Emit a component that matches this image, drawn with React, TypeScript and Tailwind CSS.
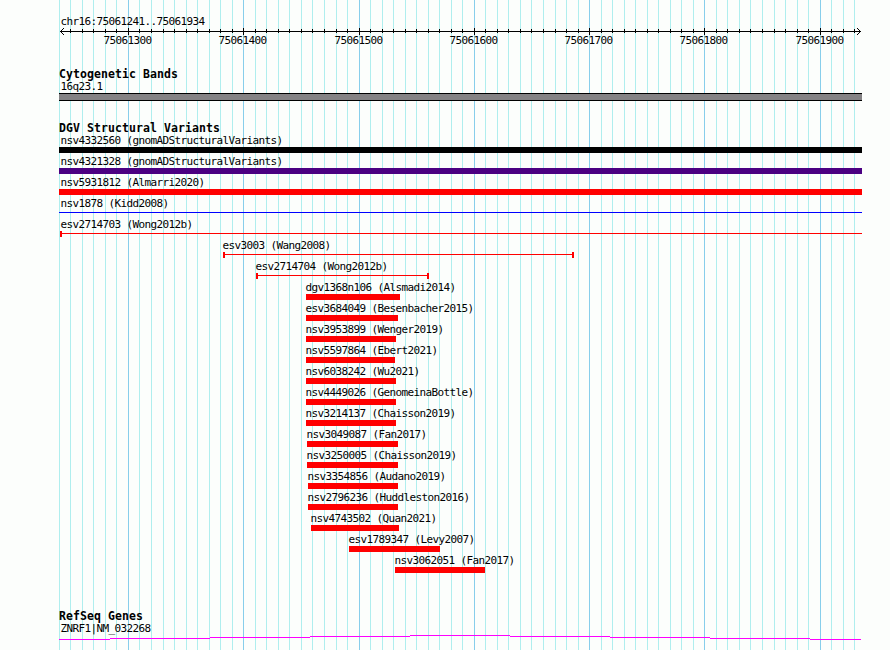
import { clsx } from "clsx";

type Shape = "bar" | "line" | "span";

type Variant = {
  label: string;
  start: number;
  end: number;
  shape?: Shape;
  color?: string;
  labelX?: number;
};

const LEFT = 59;
const RIGHT = 862;

const MAJOR_TICKS = [128, 243, 359, 474, 589, 704, 820];
const MINOR_TICKS = [
  70, 82, 93, 105, 116, 139, 151, 163, 174, 186, 197, 209, 220, 232, 255, 266, 278, 289, 301, 312,
  324, 336, 347, 370, 382, 393, 405, 416, 428, 439, 451, 462, 485, 497, 508, 520, 531, 543, 555,
  566, 578, 601, 612, 624, 635, 647, 658, 670, 681, 693, 716, 727, 739, 750, 762, 774, 785, 797,
  808, 831, 843, 854,
];

const VARIANTS: Variant[] = [
  { label: "nsv4332560 (gnomADStructuralVariants)", start: LEFT, end: RIGHT, color: "bg-black", labelX: 60.5 },
  { label: "nsv4321328 (gnomADStructuralVariants)", start: LEFT, end: RIGHT, color: "bg-[#4b0082]", labelX: 60.5 },
  { label: "nsv5931812 (Almarri2020)", start: LEFT, end: RIGHT, labelX: 60.5 },
  { label: "nsv1878 (Kidd2008)", start: LEFT, end: RIGHT, shape: "line", color: "bg-[#0000ff]", labelX: 60.5 },
  { label: "esv2714703 (Wong2012b)", start: 60, end: RIGHT, shape: "span", labelX: 60.5 },
  { label: "esv3003 (Wang2008)", start: 223, end: 574, shape: "span" },
  { label: "esv2714704 (Wong2012b)", start: 256, end: 429, shape: "span" },
  { label: "dgv1368n106 (Alsmadi2014)", start: 306, end: 400 },
  { label: "esv3684049 (Besenbacher2015)", start: 306, end: 398 },
  { label: "nsv3953899 (Wenger2019)", start: 306, end: 396 },
  { label: "nsv5597864 (Ebert2021)", start: 306, end: 395 },
  { label: "nsv6038242 (Wu2021)", start: 306, end: 396 },
  { label: "nsv4449026 (GenomeinaBottle)", start: 306, end: 396 },
  { label: "nsv3214137 (Chaisson2019)", start: 306, end: 396 },
  { label: "nsv3049087 (Fan2017)", start: 307, end: 398 },
  { label: "nsv3250005 (Chaisson2019)", start: 307, end: 398 },
  { label: "nsv3354856 (Audano2019)", start: 308, end: 398 },
  { label: "nsv2796236 (Huddleston2016)", start: 308, end: 398 },
  { label: "nsv4743502 (Quan2021)", start: 311, end: 399 },
  { label: "esv1789347 (Levy2007)", start: 349, end: 440 },
  { label: "nsv3062051 (Fan2017)", start: 395, end: 485 },
];

function Gridlines() {
  return (
    <svg className="absolute inset-0" width="890" height="650" shapeRendering="crispEdges" aria-hidden="true">
      {[LEFT, ...MINOR_TICKS].map((x) => (
        <rect key={x} x={x} y="0" width="1" height="650" fill="#afeeee" />
      ))}
      {MAJOR_TICKS.map((x) => (
        <rect key={x} x={x} y="0" width="1" height="650" fill="#87ceeb" />
      ))}
    </svg>
  );
}

function Ruler() {
  return (
    <header className="pt-[15px]">
      <p className="h-[13px] pl-[60.5px]">chr16:75061241..75061934</p>
      <svg className="block h-[6px] overflow-visible" width="890" height="6" shapeRendering="crispEdges">
        <rect x="60" y="3" width="801" height="1" />
        {MINOR_TICKS.map((x) => (
          <rect key={x} x={x} y="1" width="1" height="4" />
        ))}
        {MAJOR_TICKS.map((x) => (
          <rect key={x} x={x} y="0" width="1" height="7" />
        ))}
        <path d="M61 2h1v1h-1z M62 1h1v1h-1z M63 0h1v1h-1z M61 4h1v1h-1z M62 5h1v1h-1z M63 6h1v1h-1z" />
        <path d="M859 2h1v1h-1z M858 1h1v1h-1z M857 0h1v1h-1z M859 4h1v1h-1z M858 5h1v1h-1z M857 6h1v1h-1z" />
      </svg>
      <div className="flex h-[13px] pl-[103.5px]">
        {MAJOR_TICKS.map((x, i) => (
          <span key={x} className="shrink-0" style={{ width: (MAJOR_TICKS[i + 1] ?? x + 50) - x }}>
            {75061300 + i * 100}
          </span>
        ))}
      </div>
    </header>
  );
}

function TrackTitle({ children }: { children: string }) {
  return <h2 className="h-[12px] pl-[59px] text-[11.5px] font-bold tracking-[0.077px]">{children}</h2>;
}

function VariantRow({ label, start, end, shape = "bar", color = "bg-[#ff0000]", labelX }: Variant) {
  return (
    <li className="h-[21px]">
      <p className="h-[13px]" style={{ paddingLeft: labelX ?? start - 0.5 }}>
        {label}
      </p>
      <div className="flex h-[6px] items-start" style={{ marginLeft: start, width: end - start }}>
        {shape === "span" && <i className={clsx("h-full w-[2px]", color)} />}
        <i className={clsx("grow", color, shape === "bar" ? "h-full" : "mt-[2px] h-px")} />
        {shape === "span" && end < RIGHT && <i className={clsx("h-full w-[2px]", color)} />}
      </div>
    </li>
  );
}

export default function App() {
  return (
    <main className="relative h-[650px] w-[890px] overflow-hidden bg-[#fcfefc] font-['DejaVu_Sans_Mono',monospace] text-[11px] leading-[13px] tracking-[-0.622px] whitespace-pre text-black">
      <Gridlines />
      <div className="relative">
        <Ruler />

        <section className="pt-[21px]">
          <TrackTitle>Cytogenetic Bands</TrackTitle>
          <p className="h-[13px] pl-[60.5px]">16q23.1</p>
          <div className="ml-[59px] h-[8px] w-[803px] border-y border-black bg-[#848284]" />
        </section>

        <section className="pt-[21px]">
          <TrackTitle>DGV Structural Variants</TrackTitle>
          <ul>
            {VARIANTS.map((variant) => (
              <VariantRow key={variant.label} {...variant} />
            ))}
          </ul>
        </section>

        <section className="pt-[35px]">
          <TrackTitle>RefSeq Genes</TrackTitle>
          <p className="h-[13px] pl-[60.5px]">ZNRF1|NM_032268</p>
          <svg className="block" width="890" height="5" shapeRendering="crispEdges" fill="#ff00ff">
            <path d="M59 4h51v1h-51z M110 3h100v1h-100z M210 2h100v1h-100z M310 1h100v1h-100z M410 0h100v1h-100z M510 1h100v1h-100z M610 2h100v1h-100z M710 3h100v1h-100z M810 4h51v1h-51z" />
          </svg>
        </section>
      </div>
    </main>
  );
}
